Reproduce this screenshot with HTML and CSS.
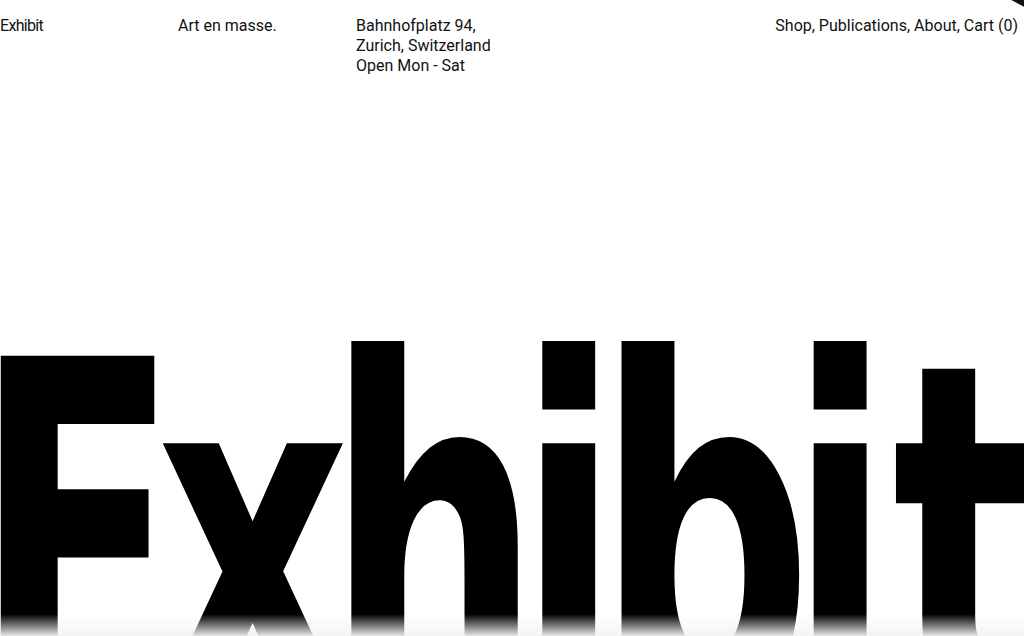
FILE: index.html
```html
<!DOCTYPE html>
<html lang="en">
<head>
    <meta charset="UTF-8">
    <meta name="viewport" content="width=device-width, initial-scale=1.0">
    <title>Exhibit</title>
    <link rel="stylesheet" href="styles.css">
</head>
<body>
    <div class="corner"></div>

    <header class="site-header">
        <a class="brand" href="#">Exhibit</a>
        <p class="tagline">Art en masse.</p>
        <p class="address">
            Bahnhofplatz 94,<br>
            Zurich, Switzerland<br>
            Open Mon - Sat
        </p>
        <nav class="nav">
            <a href="#">Shop</a>, <a href="#">Publications</a>, <a href="#">About</a>, <a href="#">Cart (0)</a>
        </nav>
    </header>

    <main class="hero">
        <h1 class="hero-title">Exhib<span class="loose">i</span>t</h1>
    </main>

    <div class="fade"></div>
</body>
</html>
```

FILE: styles.css
```css
* {
    margin: 0;
    padding: 0;
    box-sizing: border-box;
}

html, body {
    height: 100%;
}

body {
    background: #fff;
    color: #111;
    font-family: 'Roboto', 'Liberation Sans', Arial, sans-serif;
    font-size: 16px;
    line-height: 20px;
    overflow: hidden;
    position: relative;
}

a {
    color: inherit;
    text-decoration: none;
}

.site-header {
    display: grid;
    grid-template-columns: 178px 178px 1fr auto;
    padding: 16px 6px 0 0;
}

.brand {
    letter-spacing: -0.7px;
}

.nav {
    text-align: right;
}

.hero {
    padding-top: 224px;
}

.hero-title {
    font-family: 'DejaVu Sans', sans-serif;
    font-weight: 700;
    font-size: 445px;
    line-height: 1;
    letter-spacing: -36px;
    color: #000;
    white-space: nowrap;
    display: inline-block;
    transform: scale(0.68, 1.08);
    transform-origin: left top;
    margin-left: -27px;
}

.hero-title .loose {
    letter-spacing: 0;
}

/* bottom shading of the window */
.fade {
    position: absolute;
    left: 0;
    right: 0;
    bottom: 0;
    height: 22px;
    background: linear-gradient(rgba(243, 243, 243, 0), rgba(243, 243, 243, 0.95));
    pointer-events: none;
}

.corner {
    position: absolute;
    top: -14px;
    right: -14px;
    width: 26px;
    height: 20px;
    background: #111;
    transform: rotate(28deg);
}
```
